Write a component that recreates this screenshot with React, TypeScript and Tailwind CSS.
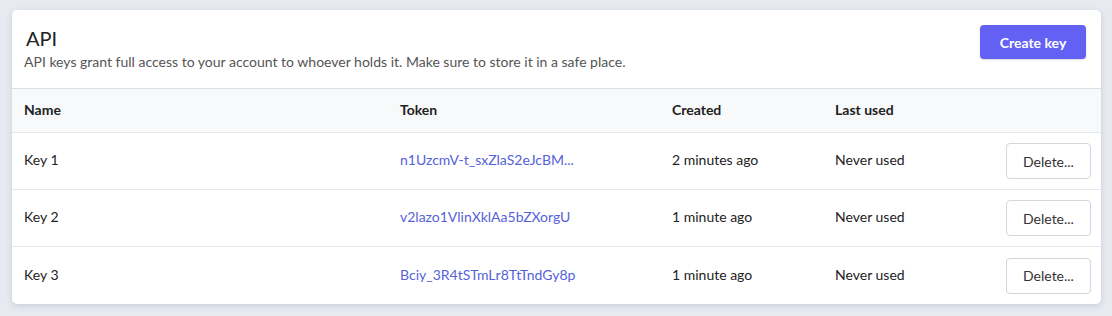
const keys = [
  { name: 'Key 1', token: 'n1UzcmV-t_sxZlaS2eJcBM...', created: '2 minutes ago', lastUsed: 'Never used' },
  { name: 'Key 2', token: 'v2lazo1VlinXklAa5bZXorgU', created: '1 minute ago', lastUsed: 'Never used' },
  { name: 'Key 3', token: 'Bciy_3R4tSTmLr8TtTndGy8p', created: '1 minute ago', lastUsed: 'Never used' },
];

const cols = 'grid grid-cols-[376px_272px_163px_1fr] items-center';

export default function App() {
  return (
    <div className="min-h-[316px] bg-[#e7ebf1] pt-[10px] pl-[12px] pr-[11px] font-['Lato',sans-serif] text-[#222]">
      <div className="bg-white rounded-[5px] shadow-[0_2px_6px_rgba(30,40,60,0.15)] overflow-hidden">
        {/* header */}
        <div className="flex items-start justify-between pl-3 pr-[15px] pt-4 pb-[17px] border-b border-[#dcdfe4]">
          <div>
            <h2 className="text-[20px] leading-6 text-[#222] pl-[2px]">API</h2>
            <p className="mt-[3px] text-[14px] leading-[18px] text-[#555]">
              API keys grant full access to your account to whoever holds it. Make sure to store it in a safe place.
            </p>
          </div>
          <button className="mt-[-1px] h-[34px] w-[106px] rounded-[4px] bg-[#6361f4] text-[14px] font-bold text-white shadow-[0_1px_2px_rgba(0,0,0,0.15)]">
            Create key
          </button>
        </div>

        {/* table */}
        <div className={`${cols} h-[44px] pb-[2px] bg-[#f8f9fb] border-b border-[#e6e8ec] text-[14px] font-bold text-[#222]`}>
          <div className="pl-3">Name</div>
          <div className="pl-3">Token</div>
          <div className="pl-3">Created</div>
          <div className="pl-3">Last used</div>
        </div>
        {keys.map((k, i) => (
          <div
            key={k.name}
            className={`${cols} h-[57px] text-[14px] ${i < keys.length - 1 ? 'border-b border-[#e6e8ec]' : ''}`}
          >
            <div className="pl-3 pb-[3px] text-[#222]">{k.name}</div>
            <div className="pl-3 pb-[3px] text-[#5562d9]">{k.token}</div>
            <div className="pl-3 pb-[3px] text-[#222]">{k.created}</div>
            <div className="pl-3 flex items-center justify-between pr-[10px]">
              <span className="pb-[3px] text-[#222]">{k.lastUsed}</span>
              <button className="h-[36px] w-[85px] rounded-[4px] border border-[#d3d6db] bg-white text-[14px] text-[#333]">
                Delete...
              </button>
            </div>
          </div>
        ))}
      </div>
    </div>
  );
}
